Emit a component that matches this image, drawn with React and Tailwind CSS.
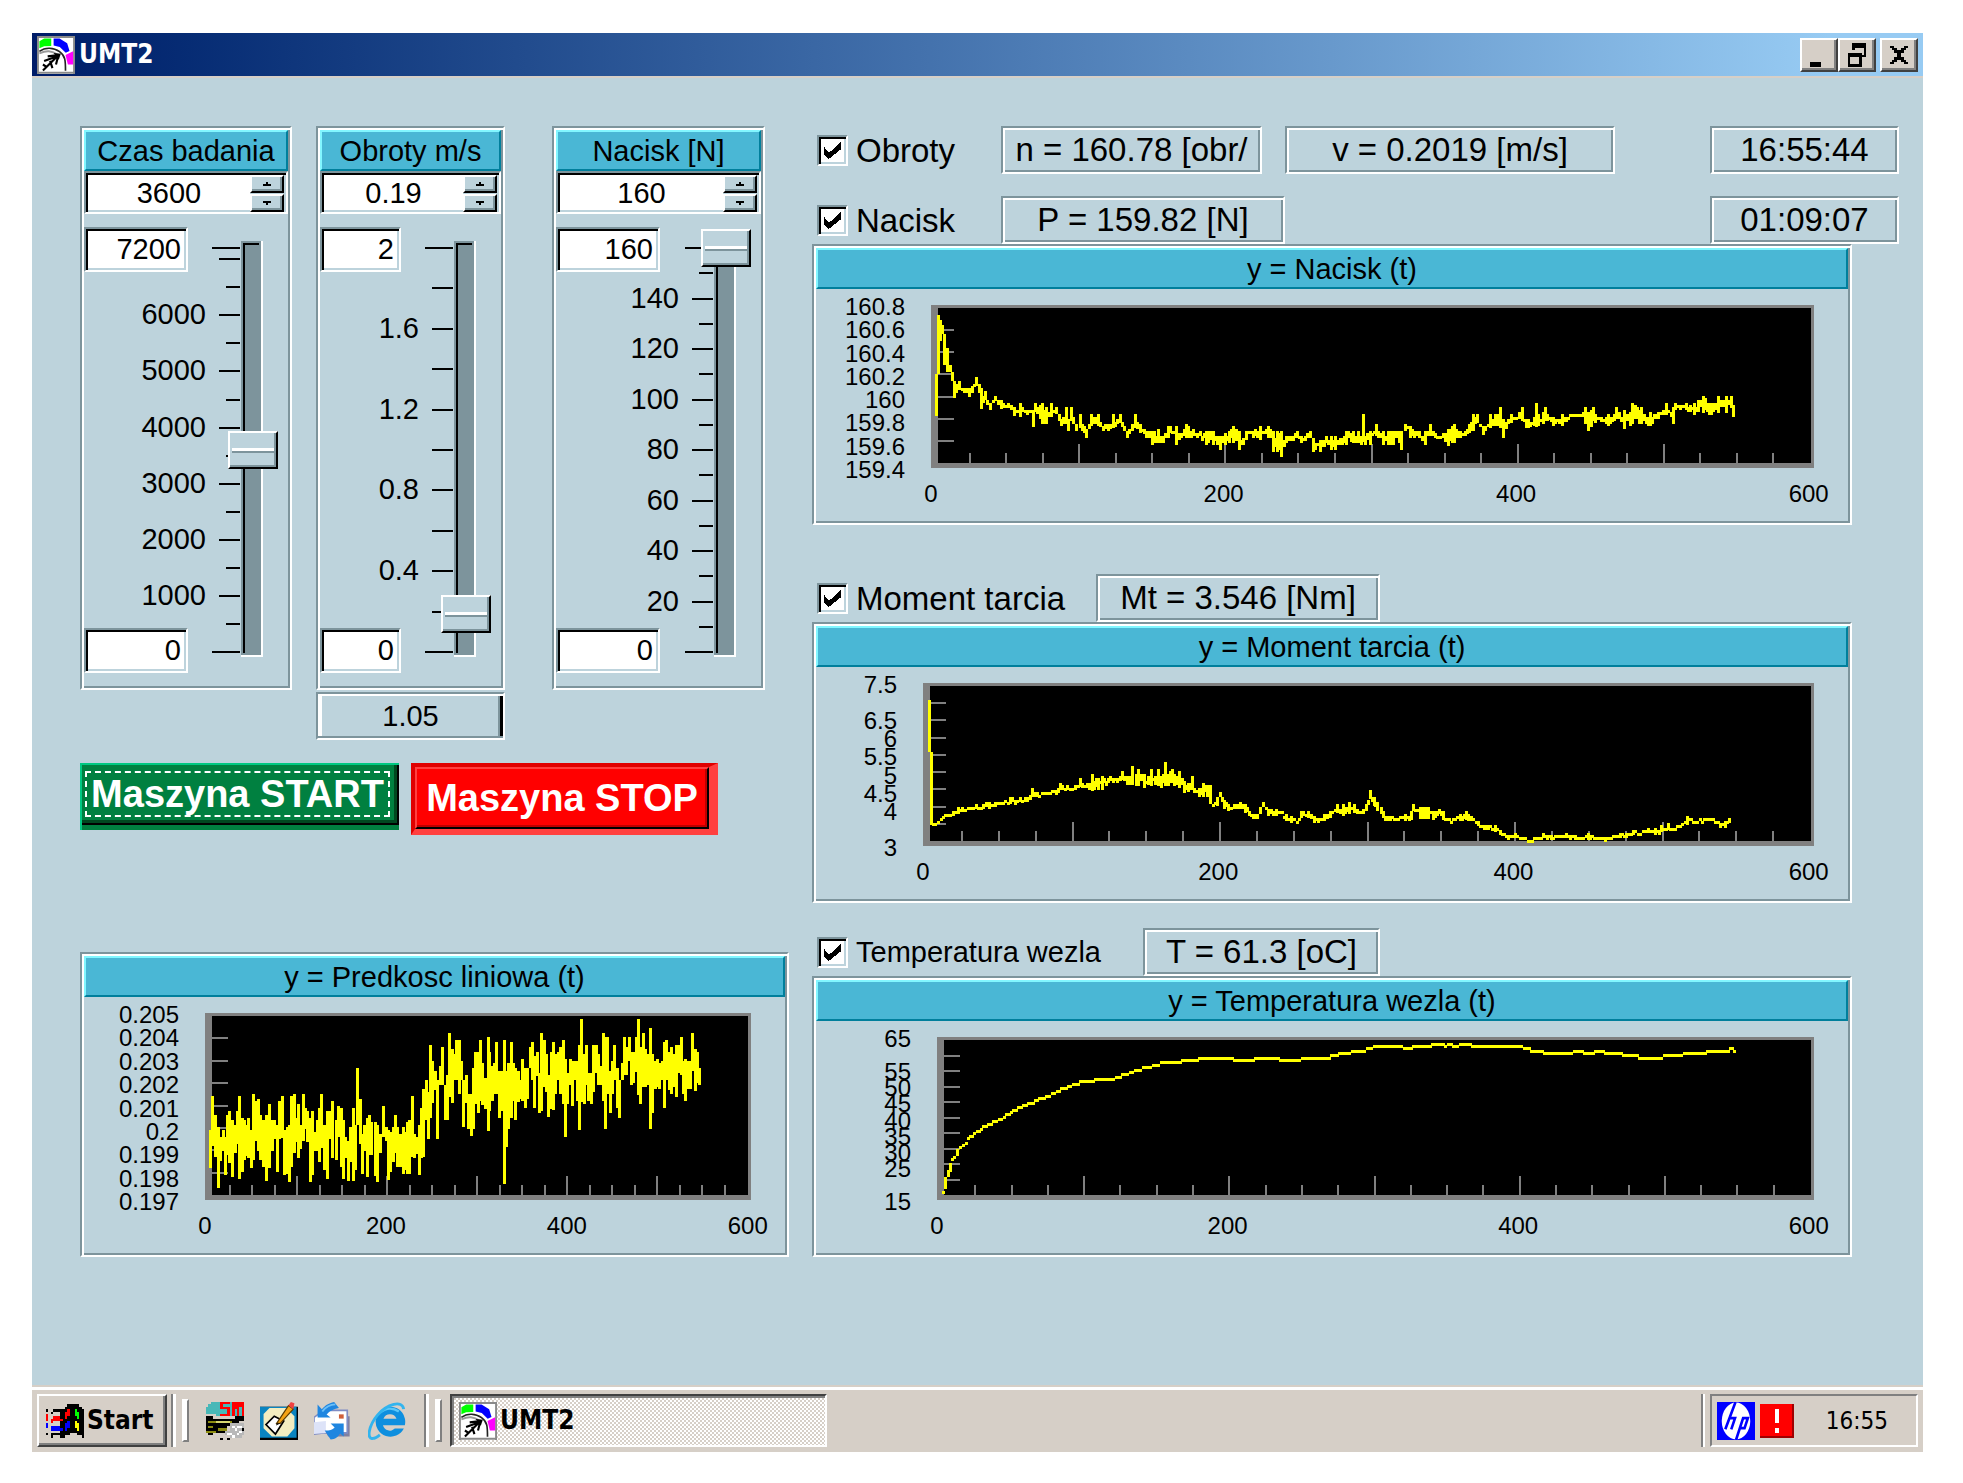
import { useState } from "react";
import clsx from "clsx";

const GROOVE =
    "border-2 border-t-[#7d949c] border-l-[#7d949c] border-r-white border-b-white p-[2px] shadow-[inset_2px_2px_0_#fff,inset_-2px_-2px_0_#7d949c]";
const SUNKEN =
    "border-2 border-t-[#7d949c] border-l-[#7d949c] border-r-white border-b-white bg-white shadow-[inset_2px_2px_0_#000,inset_-2px_-2px_0_#bdd3dc]";
const RAISED =
    "border-2 border-t-white border-l-white border-r-[#404040] border-b-[#404040] bg-[#d6cfc7] shadow-[inset_-2px_-2px_0_#808080]";

/* Traces: every row is [x, high, low], "from" and "step" turn rows into plot units */
const NACISK = [
    {
        from: [-431, -205],
        step: [0.3827, 1 / 3],
        rows: [
            [1141, 828, 955], [1147, 650, 828], [1157, 680, 710], [1162, 710, 800], [1170, 750, 820], [1176, 800, 820],
            [1183, 822, 850], [1188, 850, 897], [1200, 850, 875], [1215, 870, 885], [1228, 870, 897], [1235, 865, 885],
            [1245, 835, 865], [1252, 855, 885], [1258, 870, 933], [1268, 880, 905], [1282, 910, 933], [1296, 892, 905],
            [1310, 905, 933], [1330, 915, 930], [1345, 928, 955], [1360, 915, 955], [1385, 935, 945], [1393, 935, 982],
            [1400, 915, 940],
        ],
    },
    {
        from: [109, 65],
        step: [1 / 3, 1 / 3],
        rows: [
            [7, 105, 172], [20, 120, 170], [35, 105, 145], [50, 120, 140], [65, 150, 172], [78, 120, 170], [85, 150, 187],
            [93, 120, 160], [110, 165, 187], [120, 140, 180], [140, 180, 207], [155, 140, 172], [175, 140, 172],
            [190, 170, 185], [220, 140, 185], [240, 140, 170], [262, 185, 207], [285, 140, 185], [300, 165, 190],
            [320, 185, 205], [337, 190, 230], [355, 183, 228], [370, 205, 228], [385, 170, 205], [410, 170, 228],
            [425, 195, 207], [440, 168, 207], [460, 183, 207], [480, 190, 207], [500, 185, 230], [520, 185, 230],
            [540, 205, 250], [555, 195, 230], [580, 170, 220], [597, 190, 250], [610, 210, 228], [620, 185, 190],
            [640, 185, 205], [660, 170, 215], [685, 170, 205], [700, 185, 250], [712, 185, 250], [724, 185, 265],
            [740, 205, 228], [773, 185, 207], [785, 205, 228], [810, 185, 207], [820, 210, 250], [840, 215, 250],
            [860, 205, 228], [873, 205, 250], [885, 205, 250], [900, 210, 230], [920, 185, 228], [940, 190, 228],
            [955, 185, 220], [965, 200, 228], [971, 140, 228], [977, 200, 228], [990, 190, 230], [1010, 168, 200],
            [1030, 185, 228], [1060, 185, 228], [1070, 185, 205], [1085, 190, 250], [1095, 168, 187], [1110, 170, 207],
        ],
    },
    {
        from: [349, -285],
        step: [0.4209, 1 / 3],
        rows: [
            [320, 1235, 1255], [345, 1235, 1278], [358, 1218, 1255], [375, 1252, 1257], [400, 1230, 1278],
            [415, 1218, 1278], [430, 1235, 1255], [445, 1230, 1245], [460, 1190, 1240], [470, 1190, 1220], [483, 1225, 1255],
            [500, 1190, 1235], [525, 1170, 1235], [531, 1200, 1255], [550, 1190, 1215], [575, 1170, 1215], [590, 1205, 1235],
            [605, 1195, 1225], [610, 1155, 1225], [615, 1190, 1225], [630, 1170, 1215], [650, 1195, 1222], [670, 1190, 1222],
            [690, 1188, 1192], [715, 1188, 1192], [725, 1170, 1222], [733, 1180, 1235], [745, 1170, 1215], [760, 1195, 1205],
            [780, 1190, 1222], [800, 1170, 1205], [818, 1175, 1235], [838, 1155, 1220], [860, 1170, 1220], [880, 1180, 1222],
            [900, 1180, 1200], [918, 1155, 1190], [935, 1170, 1222], [940, 1155, 1175], [965, 1155, 1175], [985, 1155, 1192],
            [1005, 1133, 1180], [1025, 1155, 1192], [1042, 1133, 1180], [1060, 1133, 1180], [1072, 1133, 1170], [1077, 1160, 1192],
        ],
    },
];

const MOMENT = [
    {
        from: [-123, -123],
        step: [0.3827, 1 / 3],
        rows: [
            [338, 427, 580], [344, 583, 800], [350, 795, 800], [355, 795, 800], [362, 785, 795], [375, 770, 780],
            [400, 760, 772], [415, 745, 768], [425, 745, 762], [440, 745, 755], [460, 740, 752], [480, 735, 750],
            [495, 728, 748], [510, 727, 740], [525, 730, 738], [550, 718, 738], [575, 718, 730], [595, 715, 730],
            [608, 690, 718], [620, 703, 718], [640, 700, 710], [660, 697, 705], [670, 695, 710], [680, 675, 697],
            [700, 683, 695], [720, 683, 695], [733, 660, 690], [750, 675, 690], [763, 647, 695], [780, 660, 695],
            [790, 650, 695], [800, 665, 680], [812, 655, 672], [830, 657, 668], [843, 640, 665], [855, 655, 682],
            [863, 655, 682], [869, 625, 682], [878, 645, 680], [885, 633, 680], [900, 645, 688], [911, 655, 685],
            [918, 633, 685], [930, 655, 685], [938, 633, 685], [945, 650, 685], [955, 612, 680], [962, 645, 680],
            [973, 633, 675], [985, 650, 680], [992, 638, 685], [1005, 665, 697], [1015, 670, 695], [1025, 655, 695],
            [1035, 695, 705], [1045, 690, 715], [1055, 675, 718], [1065, 683, 718], [1072, 683, 740], [1080, 735, 745],
            [1090, 715, 740], [1098, 705, 720], [1110, 720, 748], [1120, 740, 762], [1135, 735, 752], [1150, 728, 752],
            [1163, 737, 765], [1175, 755, 768], [1185, 765, 780], [1195, 765, 780], [1204, 742, 755], [1212, 730, 745],
            [1225, 752, 775], [1245, 750, 770], [1260, 760, 770], [1270, 765, 788], [1285, 775, 795], [1300, 785, 793],
            [1310, 758, 780], [1330, 757, 780], [1345, 770, 788], [1355, 780, 795], [1370, 765, 785], [1385, 757, 775],
            [1405, 740, 765], [1420, 735, 768], [1437, 733, 765], [1450, 740, 768], [1465, 755, 765], [1480, 735, 755],
            [1490, 697, 720], [1500, 715, 745], [1510, 728, 755],
        ],
    },
    {
        from: [457, -13],
        step: [1 / 3, 1 / 3],
        rows: [
            [4, 415, 435], [10, 430, 450], [30, 440, 457], [50, 450, 457], [75, 435, 455], [95, 430, 455], [100, 408, 430],
            [120, 415, 450], [145, 415, 450], [160, 430, 457], [178, 423, 440], [190, 430, 457], [215, 455, 463],
            [240, 437, 460], [258, 430, 455], [275, 443, 460], [295, 460, 475], [320, 470, 485], [345, 470, 490],
            [360, 483, 500], [385, 498, 512], [405, 495, 512], [435, 508, 515], [445, 512, 520], [470, 507, 513],
            [490, 495, 510], [515, 497, 512], [540, 500, 508], [560, 495, 510], [585, 497, 513], [605, 505, 512],
            [625, 495, 513], [650, 505, 512], [675, 503, 515], [700, 502, 508], [720, 489, 505], [740, 495, 507],
            [760, 487, 500], [790, 488, 496], [805, 475, 490], [825, 480, 500], [845, 473, 495], [865, 465, 485],
            [880, 475, 483], [900, 468, 473], [915, 455, 460], [922, 445, 470], [935, 453, 462], [960, 453, 463],
            [980, 447, 455], [1000, 450, 457], [1015, 460, 468], [1035, 460, 478], [1048, 450, 465],
        ],
    },
];

const TEMPERATURA = [
    {
        from: [-137, -128],
        step: [0.3827, 1 / 3],
        rows: [
            [376, 850], [381, 812], [388, 790], [393, 765], [404, 745], [412, 725], [420, 715], [435, 700], [445, 683],
            [463, 668], [480, 655], [500, 643], [520, 633], [540, 620], [565, 602], [585, 590], [615, 578], [645, 562],
            [660, 555], [690, 540], [720, 524], [760, 517], [790, 508], [800, 514], [820, 508], [850, 497], [890, 480],
            [930, 470], [950, 463], [990, 462], [1000, 457], [1030, 455], [1045, 450], [1125, 450], [1135, 457],
            [1180, 457], [1190, 450], [1245, 450], [1255, 457], [1300, 457], [1312, 450], [1375, 450], [1390, 442],
            [1430, 432], [1470, 425], [1500, 415], [1510, 415],
        ],
    },
    {
        from: [443, -68],
        step: [1 / 3, 1 / 3],
        rows: [
            [0, 235], [60, 235], [65, 242], [95, 242], [100, 235], [150, 235], [157, 228], [185, 228], [190, 235],
            [205, 228], [215, 235], [240, 228], [265, 228], [272, 235], [418, 235], [425, 242], [440, 242], [447, 249],
            [480, 249], [487, 256], [575, 256], [582, 249], [600, 249], [607, 256], [640, 256], [647, 249], [662, 249],
            [669, 256], [718, 256], [725, 263], [765, 263], [772, 270], [845, 270], [852, 263], [905, 263], [912, 256],
            [975, 256], [982, 249], [1044, 249], [1051, 242], [1058, 249], [1062, 249],
        ],
    },
];

const PREDKOSC = [
    {
        from: [-145, -74],
        step: [0.4719, 1 / 3],
        rows: [
            [319, 575, 685], [324, 478, 625], [330, 530, 655], [335, 570, 752], [340, 600, 670], [346, 575, 640],
            [351, 600, 710], [355, 535, 655], [360, 520, 675], [365, 545, 718], [372, 560, 645], [380, 478, 725],
            [386, 540, 700], [392, 550, 670], [400, 542, 665], [405, 575, 688], [410, 470, 665], [415, 490, 610],
            [420, 485, 640], [425, 530, 665], [432, 550, 690], [438, 530, 730], [445, 500, 690], [450, 550, 640],
            [455, 550, 610], [460, 560, 700], [466, 490, 605], [471, 478, 605], [475, 575, 710], [482, 570, 710],
            [486, 560, 730], [491, 478, 690], [496, 470, 650], [505, 500, 660], [510, 560, 630], [516, 470, 610],
            [525, 520, 615], [530, 540, 730], [536, 520, 710], [545, 545, 640], [550, 510, 675], [555, 470, 630],
            [560, 560, 695], [566, 520, 725], [572, 520, 605], [578, 490, 660], [585, 545, 665], [590, 505, 600],
            [596, 515, 690], [601, 550, 725], [606, 595, 660], [611, 610, 730], [616, 570, 675], [621, 515, 738],
            [626, 560, 695], [631, 393, 535], [636, 485, 620], [641, 590, 710], [646, 560, 640], [651, 540, 715],
            [656, 530, 650], [661, 555, 655], [668, 555, 720], [673, 560, 730], [680, 590, 650], [685, 508, 600],
            [691, 570, 610], [696, 575, 722], [701, 580, 700], [707, 570, 675], [711, 535, 650], [716, 570, 690],
            [722, 590, 690], [727, 570, 715], [731, 580, 690], [736, 555, 708], [741, 550, 710], [746, 478, 660],
            [752, 590, 660], [758, 600, 650], [762, 560, 710], [767, 510, 660], [771, 455, 660], [776, 430, 550],
            [781, 460, 605], [785, 322, 540], [790, 372, 500], [796, 400, 455], [801, 430, 610], [806, 385, 445],
            [811, 330, 440], [816, 440, 545], [821, 410, 545], [826, 287, 475], [831, 335, 498], [836, 350, 430],
            [841, 308, 430], [846, 308, 470], [851, 372, 430], [856, 430, 575], [861, 415, 500], [866, 470, 575],
            [871, 470, 595], [876, 390, 575], [881, 345, 500], [886, 340, 525], [891, 308, 490], [896, 380, 510],
            [901, 420, 510], [907, 300, 582], [911, 340, 515], [916, 385, 490], [921, 380, 470], [926, 315, 470],
            [931, 400, 545], [936, 400, 520], [941, 310, 745], [946, 400, 630], [951, 380, 575], [956, 315, 540],
            [961, 378, 490], [966, 390, 548], [971, 400, 490], [976, 430, 490], [981, 365, 490], [986, 390, 510],
            [991, 390, 480], [996, 328, 390], [1001, 315, 430], [1006, 355, 510], [1011, 340, 410], [1016, 405, 525],
            [1021, 287, 520], [1026, 308, 450], [1031, 350, 465], [1036, 410, 540], [1041, 340, 510], [1046, 315, 520],
            [1051, 350, 470], [1056, 345, 430], [1061, 330, 470], [1066, 308, 500], [1071, 365, 597], [1076, 405, 500],
            [1081, 365, 440], [1086, 372, 505], [1091, 372, 430], [1096, 372, 490], [1101, 322, 575], [1106, 245, 490],
            [1111, 350, 500], [1116, 322, 440], [1121, 405, 490], [1126, 405, 500], [1131, 322, 465], [1136, 322, 410],
            [1141, 350, 440], [1146, 385, 440], [1151, 287, 490], [1156, 300, 575], [1161, 300, 470], [1166, 400, 525],
            [1171, 370, 470], [1176, 322, 430], [1181, 390, 510], [1186, 430, 540], [1191, 378, 430], [1196, 300, 410],
            [1201, 328, 410], [1206, 300, 370], [1211, 340, 440], [1216, 345, 440], [1221, 300, 405], [1226, 245, 470],
            [1231, 330, 498], [1236, 287, 450], [1241, 335, 445], [1246, 350, 440], [1251, 273, 575], [1256, 350, 525],
            [1261, 370, 455], [1266, 365, 450], [1271, 375, 455], [1276, 372, 430], [1281, 315, 512], [1286, 308, 430],
            [1291, 345, 455], [1296, 330, 475], [1301, 350, 450], [1306, 322, 480], [1311, 322, 410], [1316, 300, 410],
            [1321, 370, 470], [1326, 365, 490], [1331, 372, 455], [1336, 372, 455], [1341, 287, 400], [1346, 338, 465],
            [1351, 345, 440], [1356, 390, 440],
        ],
    },
];

// width of one plotted column
const COL = 2.36;
const PEN = 3;

function tracePath(parts) {
    const pts = parts.flatMap(({ from, step, rows }) =>
        rows.map(([x, hi, lo = hi]) => [from[0] + x * step[0], from[1] + hi * step[1], from[1] + lo * step[1]])
    );
    let seed = 7;
    const rand = () => {
        seed = (seed * 16807) % 2147483647;
        return seed / 2147483647;
    };
    const cols = [];
    pts.forEach(([x, hi, lo], i) => {
        cols.push([x, hi, lo]);
        const next = pts[i + 1];
        if (!next) return;
        const n = Math.round((next[0] - x) / COL);
        for (let k = 1; k < n; k++) {
            const t = k / n;
            const top = hi + (next[1] - hi) * t;
            const low = lo + (next[2] - lo) * t;
            cols.push([x + (next[0] - x) * t, top + (low - top) * rand() * 0.45, low - (low - top) * rand() * 0.45]);
        }
    });
    let prev = null;
    return cols
        .map(([x, a, b]) => {
            // keep neighbouring columns joined
            const top = prev ? Math.min(a, prev[1]) : a;
            const low = prev ? Math.max(b, prev[0]) : b;
            prev = [a, b];
            const y = Math.round(top / COL) * COL;
            const h = Math.max(PEN, Math.round((low - top) / COL) * COL);
            return `M${Math.round(x - PEN / 2)} ${Math.round(y - PEN / 2)}h${PEN}v${Math.round(h)}h-${PEN}z`;
        })
        .join("");
}

function GaugeIcon() {
    return (
        <svg viewBox="0 0 16 16" className="size-[38px] shrink-0" aria-hidden="true">
            <rect width="16" height="16" fill="#fff" />
            <path d="M0 .4h16M.4 0v16M15.6 0v16M0 15.5h16" stroke="#8a8a8a" strokeWidth=".8" />
            <path d="M1 2.2 3 1H6v3.200L3 4.300 1 5.200z" fill="#0f0" />
            <path d="M7 1h2.5l3.2 2 1 3.3-1.600.7L9.600 4.600 7 4z" fill="#00f" />
            <path d="M12 8 15.200 6.400V12H13z" fill="#f0f" />
            <path d="M1 6.500C3.500 4.600 7 4.800 9.500 6.600S12 10.500 12 14.600" fill="none" stroke="#222" strokeWidth=".7" />
            <path d="M1 7.300C4 6 6 6 9 8" fill="none" stroke="#999" strokeWidth=".8" />
            <path d="m4.500 8.600 4.500-.6M3 10.500l5.500-2M9.300 7.800 2.500 14.500M8.800 8.800 8 12M5.500 10.500l1 3M2.500 12l1.500 1" stroke="#000" strokeWidth=".9" fill="none" />
            <path d="m7 7.200 3 .3-.8 2.500z" fill="#000" />
        </svg>
    );
}

function WindowsFlag() {
    return (
        <svg viewBox="0 0 16 14" className="h-[34px] w-[38px] shrink-0" shapeRendering="crispEdges" aria-hidden="true">
            <path d="M6 2h2V1h1V0h5v1h1v1h1v12h-1v-1h-2v-1h-3v1H8v1H6z" fill="#000" />
            <path d="M2 3h1V2h3v1H3v1H2zM2 12h4v1H3v1H2zM0 2h1v1H0zM0 12h1v1H0z" fill="#000" />
            <path d="M8 3h1V2h1v3H9v1H8zM2 6h1V5h3v1h1v1H3v1H2zM0 4h1v3H0z" fill="#f00" />
            <path d="M12 2h1v1h1v3h-1V5h-1z" fill="#0f0" />
            <path d="M8 8h1V7h1v3H9v1H8zM2 9h4v1h1v1H2zM0 8h1v2H0z" fill="#00f" />
            <path d="M12 7h1v1h1v3h-1v-1h-1z" fill="#ff0" />
        </svg>
    );
}

function CarIcon() {
    return (
        <svg viewBox="0 0 16 16" className="size-[38px]" shapeRendering="crispEdges" aria-hidden="true">
            <path d="M2 0h14v6H4V5H0V2h1V1h1z" fill="#48b8b8" />
            <path d="M6 0h4v1H7v1h3v4H6V5h3V3H6zM11 0h5v6h-1V2h-1v4h-1V3h-1v3h-1z" fill="#f00" />
            <path d="M0 6h3v1h9V6h4v2h-2v2H9v3H2v-1H0z" fill="#000" />
            <path d="M1 8h10v1H1zM1 10h2v1H1zM5 11h4v1H5zM0 12h4v1H0z" fill="#8c8c10" />
            <path d="M4 8h6v1H4z" fill="#d8d870" />
            <path d="M10 9h6v5h-1v1h-5v-1H8v-2h2z" fill="#b8b8b8" />
            <path d="M11 10h1v1h-1zM13 10h2v1h-2zM12 11h1v1h-1zM14 12h1v1h-1zM9 13h2v1H9zM13 13h1v1h-1zM11 14h1v1h-1z" fill="#fff" />
            <path d="M1 13h2v1H1zM6 15h1v1H6zM9 15h1v1H9zM15 11h1v1h-1z" fill="#000" />
        </svg>
    );
}

function NotepadIcon() {
    return (
        <svg viewBox="0 0 16 16" className="size-[38px]" aria-hidden="true">
            <path d="M0 2h16v14H0z" fill="#000" />
            <path d="M0 2h15.400v13H0z" fill="#0a84c0" />
            <path d="M4 2.500h7l3.500 3.500v5l-3 3.500H5L1.500 11V5z" fill="#f3edc0" />
            <path d="M2.500 9.500 6 6l4 2-3.500 5.500z" fill="#fff" stroke="#000" strokeWidth=".7" />
            <path d="m7 9 5-7.500 2 1.500-5.500 6z" fill="#f5a313" stroke="#5b3b00" strokeWidth=".5" />
            <path d="m12 1.500 1-1.500 1.500.5L14 3z" fill="#f04040" />
            <path d="m7 9 1.500 0L6.800 9.900z" fill="#000" />
        </svg>
    );
}

function MailIcon() {
    return (
        <svg viewBox="0 0 16 16" className="size-[38px]" aria-hidden="true">
            <path d="M1 6h14v8.500H6z" fill="#8080a0" />
            <path d="M0 6.500 4 3.500h10V13H4L0 13.500z" fill="#fff" stroke="#7f8cc4" strokeWidth=".7" />
            <path d="M0 8.500 5 8v5l-5 .5z" fill="#dde3f8" />
            <path d="M1.500 1v5.500h5.500L5.300 5.300C6.500 3.800 8 3 10.500 2.500L8.500 0C6 .5 4.500 1.700 3.300 3z" fill="#1f86e0" />
            <path d="M3.500 4C5 2 7 1 9 1" fill="none" stroke="#6cc0f8" strokeWidth=".8" />
            <path d="M12.500 14.500V9H7l1.700 1.700c-1 1-2 1.300-4.200 1.300L7 15.800c2 0 3-1 4-2.500z" fill="#1f86e0" />
            <path d="M10.500 5.200h2v1.800h-2z" fill="#d0603a" />
        </svg>
    );
}

function ExplorerIcon() {
    return (
        <svg viewBox="0 0 16 16" className="size-[38px]" aria-hidden="true">
            <path d="M9.500 2a6.300 6.300 0 1 0 5.600 9.200h-3.800A3 3 0 0 1 6.300 9.800H15.500A6.300 6.300 0 0 0 9.500 2zM6.500 7A3 3 0 0 1 12 7z" fill="#0e8fdf" />
            <path d="M5 4.500C7 2.800 10 2 13 4" fill="none" stroke="#5cc8f8" strokeWidth="1" />
            <path d="M15 3C14.500-1 8 .8 4 5.500S-.5 16 2 15.300c1 0 2-.7 3-1.500" fill="none" stroke="#32b4ee" strokeWidth="1.200" />
        </svg>
    );
}

function HpIcon() {
    return (
        <svg viewBox="0 0 16 16" className="size-[38px]" aria-hidden="true">
            <rect width="16" height="16" fill="#00f" />
            <ellipse cx="8" cy="8" rx="6" ry="7.800" fill="#fff" />
            <path d="M7.800 0 3.500 11.500M5.400 6.800H7.600L6 11.500M8 16 11 6.800h2l-1.400 4.200H9.800" fill="none" stroke="#00f" strokeWidth="1.100" />
        </svg>
    );
}

function Heading({ children }) {
    return (
        <h2 className="h-[41px] truncate border-2 border-t-[#82f6ff] border-r-[#007f9c] border-b-[#007f9c] border-l-[#82f6ff] bg-[#4ab7d5] text-center text-[29px] leading-[38px]">
            {children}
        </h2>
    );
}

function Readout({ className, children }) {
    return (
        <output className={clsx(GROOVE, "block h-12 overflow-hidden text-center text-[33px] leading-[40px] whitespace-nowrap", className)}>
            {children}
        </output>
    );
}

function SpinButton({ label, up, onClick }) {
    return (
        <button
            type="button"
            aria-label={label}
            onClick={onClick}
            className="flex h-[18px] w-[34px] items-center justify-center border-2 border-t-white border-r-black border-b-black border-l-white bg-[#bdd3dc] shadow-[inset_-2px_-2px_0_#7d949c]"
        >
            <svg viewBox="0 0 8 4" className="h-1 w-2" shapeRendering="crispEdges">
                <path d={up ? "M3 0h2v2h3v2H0V2h3z" : "M0 0h8v2H5v2H3V2H0z"} />
            </svg>
        </button>
    );
}

const SCALE_TOP = 21;
const SCALE_SPAN = 404;

function SliderPanel({ title, max, step, major, minor, shortMinor, initial, inputWidth, className }) {
    const [value, setValue] = useState(initial);
    const yOf = (v) => SCALE_TOP + SCALE_SPAN * (1 - v / max);
    const count = Math.round(max / minor + 0.01);
    const ticks = [];
    for (let i = 1; i <= count; i++) {
        const v = Math.round(i * minor * 100) / 100;
        if (v >= max) continue;
        const isMajor = Math.abs(v / major - Math.round(v / major)) < 0.001;
        ticks.push({ v, isMajor });
    }
    const bump = (d) => setValue((v) => Math.min(max, Math.max(0, Math.round((Number(v) + d) * 100) / 100)));

    return (
        <section className={clsx(GROOVE, className)}>
            <Heading>{title}</Heading>
            <div className={clsx(SUNKEN, "flex h-[43px] pt-[2px] pr-[2px] pl-[2px]")}>
                <input
                    aria-label={title}
                    value={value}
                    onChange={(e) => setValue(e.target.value)}
                    className="min-w-0 flex-1 bg-transparent text-center text-[29px] outline-none"
                />
                <div className="flex flex-col gap-px bg-[#bdd3dc]">
                    <SpinButton up label={`${title} +`} onClick={() => bump(step)} />
                    <SpinButton label={`${title} -`} onClick={() => bump(-step)} />
                </div>
            </div>

            <div className="mt-[13px] mb-[13px] grid h-[446px]">
                {/* Scale */}
                <svg className="h-full w-full overflow-visible [grid-area:1/1]" shapeRendering="crispEdges">
                    <svg x="100%" className="overflow-visible">
                        <rect x="-47" y="14" width="22" height="416" fill="#fff" />
                        <rect x="-47" y="14" width="20" height="414" fill="#7d949c" />
                        <rect x="-45" y="16" width="2" height="410" fill="#000" />
                        <rect x="-45" y="16" width="16" height="2" fill="#000" />
                        <path
                            d={`M-76 ${yOf(max)}h28M-76 ${yOf(0)}h28`}
                            stroke="#000"
                            strokeWidth="2"
                        />
                        {ticks.map(({ v, isMajor }) => (
                            <g key={v}>
                                <path
                                    d={`M-48 ${Math.round(yOf(v))}h${isMajor || !shortMinor ? -21 : -14}`}
                                    stroke="#000"
                                    strokeWidth="2"
                                />
                                {isMajor && max - v > major / 2 && (
                                    <text x="-82" y={Math.round(yOf(v)) + 9} textAnchor="end" fontSize="29">
                                        {v}
                                    </text>
                                )}
                            </g>
                        ))}
                    </svg>
                </svg>
                <div className="flex flex-col justify-between [grid-area:1/1]">
                    <input
                        aria-label={`${title} max`}
                        defaultValue={max}
                        className={clsx(SUNKEN, "h-[45px] pr-[5px] text-right text-[29px]", inputWidth)}
                    />
                    <input
                        aria-label={`${title} min`}
                        defaultValue={0}
                        className={clsx(SUNKEN, "h-[45px] pr-[5px] text-right text-[29px]", inputWidth)}
                    />
                </div>
                <input
                    type="range"
                    aria-label={`${title} scale`}
                    min={0}
                    max={max}
                    step={step}
                    value={value}
                    onChange={(e) => setValue(Number(e.target.value))}
                    className="mr-[10px] h-[442px] w-[50px] appearance-none self-center justify-self-end bg-transparent [direction:rtl] [grid-area:1/1] [writing-mode:vertical-lr] [&::-webkit-slider-thumb]:h-[38px] [&::-webkit-slider-thumb]:w-[50px] [&::-webkit-slider-thumb]:appearance-none [&::-webkit-slider-thumb]:rounded-none [&::-webkit-slider-thumb]:border-2 [&::-webkit-slider-thumb]:border-t-white [&::-webkit-slider-thumb]:border-r-black [&::-webkit-slider-thumb]:border-b-black [&::-webkit-slider-thumb]:border-l-white [&::-webkit-slider-thumb]:bg-[linear-gradient(#bdd3dc_15px,#fff_15px_18px,#7d949c_18px_20px,#bdd3dc_20px)] [&::-webkit-slider-thumb]:shadow-[inset_-2px_-2px_0_#7d949c,inset_2px_0_0_#bdd3dc]"
                />
            </div>
        </section>
    );
}

function Chart({ title, width, height, labels, divisions, data, gutter, plotHeight, className }) {
    const xs = Array.from({ length: 23 }, (_, i) => (i + 1) * 25);
    const tickX = (t) => Math.round(2 + (t / 600) * (width - 6));
    const tickY = (i) => Math.round(3 + (i / divisions) * (height - 8));

    return (
        <section className={clsx(GROOVE, className)}>
            <Heading>{title}</Heading>
            <div className={clsx("pt-4 pr-[34px] pb-[53px]", gutter)}>
                <svg className={clsx("w-full overflow-visible", plotHeight)} role="img" aria-label={title}>
                    <svg viewBox={`0 0 ${width} ${height}`} width="100%" height="100%" preserveAspectRatio="none">
                        <rect width={width} height={height} fill="#808080" />
                        <rect x="7" y="3" width={width - 10} height={height - 8} fill="#000" />
                        <g stroke="#808080" strokeWidth="2" shapeRendering="crispEdges">
                            {xs.map((t) => (
                                <path key={t} d={`M${tickX(t)} ${height - 5}v${t % 100 ? -10 : -19}`} />
                            ))}
                            {Array.from({ length: divisions - 1 }, (_, i) => (
                                <path key={i} d={`M7 ${tickY(i + 1)}h16`} />
                            ))}
                        </g>
                        <path d={tracePath(data)} fill="#ff0" shapeRendering="crispEdges" />
                    </svg>
                    <g fontSize="24">
                        {labels.map(([i, text]) => (
                            <text key={i} x="-26" y={`${(i / divisions) * 100}%`} dy="10" textAnchor="end">
                                {text}
                            </text>
                        ))}
                        {[0, 200, 400, 600].map((t) => (
                            <text key={t} x={`${(t / 600) * 99.4}%`} y="100%" dy="34" textAnchor="middle">
                                {t}
                            </text>
                        ))}
                    </g>
                </svg>
            </div>
        </section>
    );
}

function Toggle({ id, label, small }) {
    return (
        <label htmlFor={id} className="flex items-center gap-2 leading-none whitespace-nowrap">
            <span className="grid size-[31px] shrink-0">
                <input
                    id={id}
                    type="checkbox"
                    defaultChecked
                    className={clsx(SUNKEN, "peer size-[31px] appearance-none [grid-area:1/1]")}
                />
                <svg
                    viewBox="0 0 7 7"
                    className="pointer-events-none invisible size-[17px] place-self-center peer-checked:visible [grid-area:1/1]"
                    shapeRendering="crispEdges"
                >
                    <path d="M0 2v3l2 2 5-4V0L2 4.500z" />
                </svg>
            </span>
            <span className={small ? "text-[29px] leading-none" : "text-[33px] leading-none"}>{label}</span>
        </label>
    );
}

function CaptionButton({ label, children }) {
    return (
        <button type="button" aria-label={label} className={clsx(RAISED, "flex h-[34px] w-[38px] items-center justify-center")}>
            <svg viewBox="0 0 12 12" className="size-[28px]" shapeRendering="crispEdges">
                {children}
            </svg>
        </button>
    );
}

function Separator() {
    return (
        <div className="flex items-center gap-[6px]">
            <div className="h-[53px] w-[5px] border-l-2 border-[#808080] bg-white" />
            <div className="h-[43px] w-[7px] border-2 border-t-white border-r-[#808080] border-b-[#808080] border-l-white bg-white" />
        </div>
    );
}

export default function App() {
    return (
        <div className="flex min-h-screen flex-col bg-white pt-[33px] pr-10 pb-[31px] pl-8 font-['Liberation_Sans',Arial,sans-serif] text-black">
            <div className="flex flex-1 flex-col bg-[#bdd3dc]">
                {/* Title bar */}
                <header className="flex h-[45px] items-center border-b-2 border-[#d6cfc7] bg-linear-to-r from-[#001c68] to-[#97cbf3] to-95% px-[5px]">
                    <GaugeIcon />
                    <h1 className="ml-1 font-['DejaVu_Sans_Condensed','DejaVu_Sans',sans-serif] text-[26px] font-bold text-white">UMT2</h1>
                    <div className="ml-auto flex">
                        <CaptionButton label="Minimize">
                            <path d="M2 9h5v2H2z" />
                        </CaptionButton>
                        <CaptionButton label="Restore">
                            <path d="M4 1h6v6H8V6h1V3H5v1H4zM2 5h6v6H2zm1 2v3h4V7z" fillRule="evenodd" />
                        </CaptionButton>
                        <div className="ml-1">
                            <CaptionButton label="Close">
                                <path d="M2 2h2v1h1v1h2V3h1V2h2v1H9v1H8v1H7v2h1v1h1v1h1v1H8V9H7V8H5v1H4v1H2V9h1V8h1V7h1V5H4V4H3V3H2z" />
                            </CaptionButton>
                        </div>
                    </div>
                </header>

                <main className="flex flex-1 gap-[23px] pt-12 pr-6 pb-32 pl-12">
                    {/* Controls */}
                    <div className="flex w-[709px] shrink-0 flex-col">
                        <div className="flex items-start">
                            <SliderPanel
                                title="Czas badania"
                                className="w-[212px]"
                                inputWidth="w-[104px]"
                                max={7200}
                                step={100}
                                major={1000}
                                minor={500}
                                shortMinor
                                initial={3600}
                            />
                            <div className="ml-6 w-[189px]">
                                <SliderPanel
                                    title="Obroty m/s"
                                    inputWidth="w-[81px]"
                                    max={2}
                                    step={0.01}
                                    major={0.4}
                                    minor={0.2}
                                    initial={0.19}
                                />
                                <output className="mt-[2px] block h-12 border-2 border-t-[#7d949c] border-r-white border-b-white border-l-[#7d949c] text-center text-[29px] leading-[44px] shadow-[inset_0_-2px_0_#7d949c,inset_4px_2px_0_#fff,inset_-3px_0_0_#000,inset_-5px_0_0_#7d949c]">
                                    1.05
                                </output>
                            </div>
                            <SliderPanel
                                title="Nacisk [N]"
                                className="ml-[47px] w-[213px]"
                                inputWidth="w-[104px]"
                                max={160}
                                step={1}
                                major={20}
                                minor={10}
                                shortMinor
                                initial={160}
                            />
                        </div>

                        <div className="mt-[23px] flex items-start gap-3 text-[38px] font-bold text-white">
                            <button
                                type="button"
                                className="h-[67px] w-[319px] border-t-2 border-l-2 border-[#00c882] bg-[#008040] pb-[5px]"
                            >
                                <span className="block h-[60px] border-r-2 border-b-2 border-black pt-[6px] pr-[7px] pl-[3px] shadow-[inset_-3px_-3px_0_#004820]">
                                    <span className="flex h-[46px] items-center justify-center border-2 border-dashed border-white leading-none whitespace-nowrap">
                                        Maszyna START
                                    </span>
                                </span>
                            </button>
                            <button
                                type="button"
                                className="h-[72px] w-[307px] border-t-4 border-r-[9px] border-b-[6px] border-l-4 border-t-[#e00000] border-r-[#ff4040] border-b-[#ff4040] border-l-[#e00000] bg-[#ff0000]"
                            >
                                <span className="flex h-full items-center justify-center border-2 border-t-[#ff4040] border-r-black border-b-black border-l-[#ff4040] leading-none whitespace-nowrap shadow-[inset_-2px_-2px_0_#c00000]">
                                    Maszyna STOP
                                </span>
                            </button>
                        </div>

                        <Chart
                            title="y = Predkosc liniowa (t)"
                            className="mt-auto"
                            gutter="pl-[121px]"
                            plotHeight="h-[187px]"
                            width={546}
                            height={187}
                            divisions={8}
                            labels={[
                                [0, "0.205"], [1, "0.204"], [2, "0.203"], [3, "0.202"], [4, "0.201"],
                                [5, "0.2"], [6, "0.199"], [7, "0.198"], [8, "0.197"],
                            ]}
                            data={PREDKOSC}
                        />
                    </div>

                    {/* Measurements */}
                    <div className="flex min-w-0 flex-1 flex-col">
                        <div className="flex items-center pl-[5px]">
                            <div className="w-[184px]">
                                <Toggle id="obroty" label="Obroty" />
                            </div>
                            <Readout className="w-[261px]">n = 160.78 [obr/</Readout>
                            <Readout className="ml-[23px] w-[330px]">v = 0.2019 [m/s]</Readout>
                            <Readout className="ml-auto w-[189px]">16:55:44</Readout>
                        </div>
                        <div className="mt-[22px] flex items-center pl-[5px]">
                            <div className="w-[184px]">
                                <Toggle id="nacisk" label="Nacisk" />
                            </div>
                            <Readout className="w-[284px]">P = 159.82 [N]</Readout>
                            <Readout className="ml-auto w-[189px]">01:09:07</Readout>
                        </div>
                        <Chart
                            title="y = Nacisk (t)"
                            className="mr-[47px]"
                            gutter="pl-[115px]"
                            plotHeight="h-[163px]"
                            width={883}
                            height={163}
                            divisions={7}
                            labels={[
                                [0, "160.8"], [1, "160.6"], [2, "160.4"], [3, "160.2"],
                                [4, "160"], [5, "159.8"], [6, "159.6"], [7, "159.4"],
                            ]}
                            data={NACISK}
                        />

                        <div className="mt-[49px] flex items-center pl-[5px]">
                            <div className="w-[279px]">
                                <Toggle id="moment" label="Moment tarcia" />
                            </div>
                            <Readout className="w-[284px]">Mt = 3.546 [Nm]</Readout>
                        </div>
                        <Chart
                            title="y = Moment tarcia (t)"
                            className="mr-[47px]"
                            gutter="pl-[107px]"
                            plotHeight="h-[163px]"
                            width={891}
                            height={163}
                            divisions={9}
                            labels={[
                                [0, "7.5"], [2, "6.5"], [3, "6"], [4, "5.5"], [5, "5"], [6, "4.5"], [7, "4"], [9, "3"],
                            ]}
                            data={MOMENT}
                        />

                        <div className="mt-[25px] flex items-center pl-[5px]">
                            <div className="w-[326px]">
                                <Toggle id="temperatura" label="Temperatura wezla" small />
                            </div>
                            <Readout className="w-[237px]">T = 61.3 [oC]</Readout>
                        </div>
                        <Chart
                            title="y = Temperatura wezla (t)"
                            className="mr-[47px]"
                            gutter="pl-[121px]"
                            plotHeight="h-[163px]"
                            width={877}
                            height={163}
                            divisions={10}
                            labels={[
                                [0, "65"], [2, "55"], [3, "50"], [4, "45"], [5, "40"],
                                [6, "35"], [7, "30"], [8, "25"], [10, "15"],
                            ]}
                            data={TEMPERATURA}
                        />
                    </div>
                </main>

                {/* Taskbar */}
                <footer className="flex h-[67px] items-center border-t-2 border-[#d6cfc7] bg-[#d6cfc7] px-[5px] pt-[2px] font-['DejaVu_Sans_Condensed','DejaVu_Sans',sans-serif] shadow-[inset_0_3px_0_#fff]">
                    <button
                        type="button"
                        className={clsx(RAISED, "mr-[4px] flex h-[53px] w-[130px] items-center gap-[3px] pl-[7px] text-[26px] font-bold")}
                    >
                        <WindowsFlag />
                        Start
                    </button>
                    <Separator />
                    <nav className="mr-[18px] ml-[17px] flex gap-4" aria-label="Quick launch">
                        <button type="button" aria-label="S7"><CarIcon /></button>
                        <button type="button" aria-label="Desktop"><NotepadIcon /></button>
                        <button type="button" aria-label="Mail"><MailIcon /></button>
                        <button type="button" aria-label="Browser"><ExplorerIcon /></button>
                    </nav>
                    <Separator />
                    <button
                        type="button"
                        className="ml-[8px] flex h-[53px] w-[377px] items-center gap-[3px] border-2 border-t-[#404040] border-r-white border-b-white border-l-[#404040] bg-[repeating-conic-gradient(#fff_0_25%,#d6cfc7_0_50%)] bg-[length:4px_4px] pl-[7px] text-[26px] font-bold shadow-[inset_2px_2px_0_#808080]"
                    >
                        <GaugeIcon />
                        UMT2
                    </button>
                    <div className="ml-auto h-[53px] w-[4px] border-l-2 border-[#808080] bg-white" />
                    <div className="ml-[5px] flex h-[53px] w-[208px] items-center border-2 border-t-[#808080] border-r-white border-b-white border-l-[#808080] pl-[5px]">
                        <HpIcon />
                        <svg viewBox="0 0 14 14" className="ml-[5px] size-[34px]" shapeRendering="crispEdges" aria-hidden="true">
                            <rect width="14" height="14" fill="#a00000" />
                            <rect width="13" height="13" fill="#f00" />
                            <path d="M6 2h2v6H6zM6 10h2v2H6z" fill="#fff" />
                        </svg>
                        <time className="mr-[28px] ml-auto text-[24px]">16:55</time>
                    </div>
                </footer>
            </div>
        </div>
    );
}
